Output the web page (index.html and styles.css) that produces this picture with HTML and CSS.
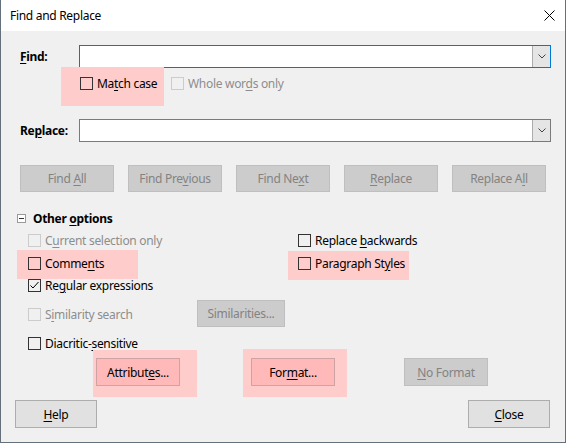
FILE: index.html
```html
<!DOCTYPE html>
<html>
<head>
<meta charset="utf-8">
<link rel="stylesheet" href="styles.css">
</head>
<body>
<div class="window">
  <div class="titlebar">
    <span class="title">Find and Replace</span>
    <svg class="close" width="11" height="11" viewBox="0 0 11 11"><path d="M0.5 0.5L10.5 10.5M10.5 0.5L0.5 10.5" stroke="#000" stroke-width="1" fill="none"/></svg>
  </div>
  <div class="content">
    <div class="field-row">
      <span class="field-label"><u>F</u>ind:</span>
      <div class="combo focused"><div class="combo-btn"><svg width="8" height="5" viewBox="0 0 8 5"><path d="M0.5 0.5L4 4L7.5 0.5" stroke="#444" fill="none"/></svg></div></div>
    </div>
    <div class="match-row">
      <div class="hl hl-match"><span class="chk"><span class="box"></span><span>Ma<u>t</u>ch case</span></span></div>
      <div class="whole"><span class="chk disabled"><span class="box"></span><span>Whole wor<u>d</u>s only</span></span></div>
    </div>
    <div class="field-row replace-row">
      <span class="field-label">Re<u>p</u>lace:</span>
      <div class="combo"><div class="combo-btn"><svg width="8" height="5" viewBox="0 0 8 5"><path d="M0.5 0.5L4 4L7.5 0.5" stroke="#444" fill="none"/></svg></div></div>
    </div>
    <div class="btn-row">
      <span class="btn disabled"><span>Find <u>A</u>ll</span></span>
      <span class="btn disabled"><span>Find Pre<u>v</u>ious</span></span>
      <span class="btn disabled"><span>Find Ne<u>x</u>t</span></span>
      <span class="btn disabled"><span><u>R</u>eplace</span></span>
      <span class="btn disabled"><span>Replace A<u>l</u>l</span></span>
    </div>
    <div class="section-head"><span class="minus"></span><span>Other <u>o</u>ptions</span></div>
    <div class="options">
      <div class="cell r1"><span class="chk disabled"><span class="box"></span><span>C<u>u</u>rrent selection only</span></span></div>
      <div class="cell r1"><span class="chk"><span class="box"></span><span>Replace <u>b</u>ackwards</span></span></div>
      <div class="hl hl-comments"><span class="chk"><span class="box"></span><span>Comme<u>n</u>ts</span></span></div>
      <div class="hl hl-para"><span class="chk"><span class="box"></span><span>Paragraph St<u>y</u>les</span></span></div>
      <div class="cell r3"><span class="chk"><span class="box checked"><svg width="11" height="11" viewBox="0 0 11 11"><path d="M1.5 5.5L4 8L9.5 2" stroke="#000" fill="none"/></svg></span><span>Re<u>g</u>ular expressions</span></span></div>
      <div class="cell r3"></div>
      <div class="cell r4 sim">
        <span class="chk disabled"><span class="box"></span><span>S<u>i</u>milarity search</span></span>
        <span class="btn disabled sim-btn"><span>Similarities...</span></span>
      </div>
      <div class="cell r4"></div>
      <div class="cell r5"><span class="chk"><span class="box"></span><span>Diacritic-<u>s</u>ensitive</span></span></div>
      <div class="cell r5"></div>
    </div>
    <div class="fmt-row">
      <div class="hl hl-attr"><span class="btn pink"><span>Attribut<u>e</u>s...</span></span></div>
      <div class="hl hl-format"><span class="btn pink fmt-btn"><span>For<u>m</u>at...</span></span></div>
      <span class="btn disabled nofmt"><span><u>N</u>o Format</span></span>
    </div>
    <div class="footer">
      <span class="btn enabled"><span><u>H</u>elp</span></span>
      <span class="btn enabled"><span><u>C</u>lose</span></span>
    </div>
  </div>
</div>
</body>
</html>
```
FILE: styles.css
```css
html, body {
  margin: 0;
  background: #f0f0f0;
}
.window {
  width: 566px;
  height: 443px;
  box-sizing: border-box;
  border: 1px solid #64707c;
  border-top: 0;
  background: #f0f0f0;
  font-family: "Noto Sans", "DejaVu Sans", sans-serif;
  font-size: 12px;
  letter-spacing: -0.3px;
  color: #000;
  display: flex;
  flex-direction: column;
  overflow: hidden;
}
u {
  text-decoration-thickness: 1px;
  text-underline-offset: 2px;
}
.titlebar {
  height: 31px;
  flex: none;
  background: #fff;
  display: flex;
  align-items: center;
  justify-content: space-between;
  padding: 0 10px 0 9px;
}
.content {
  padding: 14px 14px 0 19px;
}
.field-row {
  display: flex;
  align-items: center;
  height: 23px;
}
.replace-row {
  margin-top: 13px;
}
.field-label {
  width: 59px;
  flex: none;
  font-weight: bold;
}
.combo {
  flex: 1;
  height: 23px;
  box-sizing: border-box;
  border: 1px solid #7a7a7a;
  background: #fff;
  display: flex;
  justify-content: flex-end;
}
.combo.focused {
  border-color: #0078d7;
}
.combo-btn {
  width: 17px;
  background: #e5e5e5;
  border-left: 1px solid #adadad;
  display: flex;
  align-items: center;
  justify-content: center;
}
.match-row {
  display: flex;
  height: 38px;
  margin-left: 41px;
}
.hl {
  background: #ffcccc;
  box-sizing: border-box;
}
.hl-match {
  width: 103px;
  height: 39px;
  margin-top: -1px;
  padding: 10px 0 0 19px;
}
.whole {
  margin-left: 7px;
  padding-top: 9px;
}
.chk {
  display: flex;
  align-items: center;
  height: 13px;
  line-height: 13px;
  white-space: nowrap;
}
.box {
  width: 13px;
  height: 13px;
  box-sizing: border-box;
  border: 1px solid #333;
  margin-right: 4px;
  flex: none;
  display: flex;
  align-items: center;
  justify-content: center;
}
.chk.disabled {
  color: #8d8d8d;
}
.chk.disabled .box {
  border-color: #cccccc;
}
.btn-row {
  display: flex;
  gap: 14px;
  margin-top: 23px;
}
.btn {
  display: flex;
  align-items: center;
  justify-content: center;
  box-sizing: border-box;
  height: 28px;
  border: 1px solid #adadad;
  background: #e1e1e1;
  white-space: nowrap;
}
.btn-row .btn {
  width: 94px;
  height: 27px;
}
.btn.disabled {
  background: #cccccc;
  border-color: #bfbfbf;
  color: #838383;
}
.btn.pink {
  background: #ffb9b9;
  border-color: #cfa3a3;
  width: 84px;
}
.fmt-btn {
  width: 83px;
}
.section-head {
  display: flex;
  align-items: center;
  height: 16px;
  margin-top: 18px;
  margin-left: -3px;
  font-weight: bold;
}
.minus {
  width: 9px;
  height: 9px;
  box-sizing: border-box;
  border: 1px solid #9a9a9a;
  margin-right: 7px;
  position: relative;
  background: #fff;
}
.minus::after {
  content: "";
  position: absolute;
  left: 1px;
  right: 1px;
  top: 3px;
  height: 1px;
  background: #333;
}
.options {
  display: grid;
  grid-template-columns: 270px 1fr;
  grid-template-rows: 24px 29px 21px 27px 23px;
  margin-left: 8px;
}
.cell {
  align-self: start;
}
.r1 {
  margin-top: 8px;
}
.r5 {
  margin-top: 10px;
}
.hl-comments {
  margin-left: -11px;
  width: 121px;
  height: 29px;
  padding: 7px 0 0 11px;
}
.hl-para {
  margin-left: -10px;
  margin-top: 1px;
  width: 121px;
  height: 29px;
  padding: 6px 0 0 10px;
}
.sim {
  display: grid;
  grid-template-columns: 169px 88px;
  align-items: start;
}
.sim .chk {
  margin-top: 8px;
}
.sim-btn {
  height: 27px;
}
.fmt-row {
  display: flex;
  align-items: flex-start;
  height: 47px;
}
.hl-attr {
  margin-left: 73px;
  width: 104px;
  height: 47px;
  padding: 8px 0 0 3px;
}
.hl-format {
  margin-left: 46px;
  margin-top: -1px;
  width: 104px;
  height: 48px;
  padding: 9px 0 0 8px;
}
.nofmt {
  margin-left: 57px;
  margin-top: 8px;
  width: 84px;
}
.footer {
  display: flex;
  justify-content: space-between;
  margin: 3px 1px 0 -5px;
}
.footer .btn {
  width: 82px;
}
```
